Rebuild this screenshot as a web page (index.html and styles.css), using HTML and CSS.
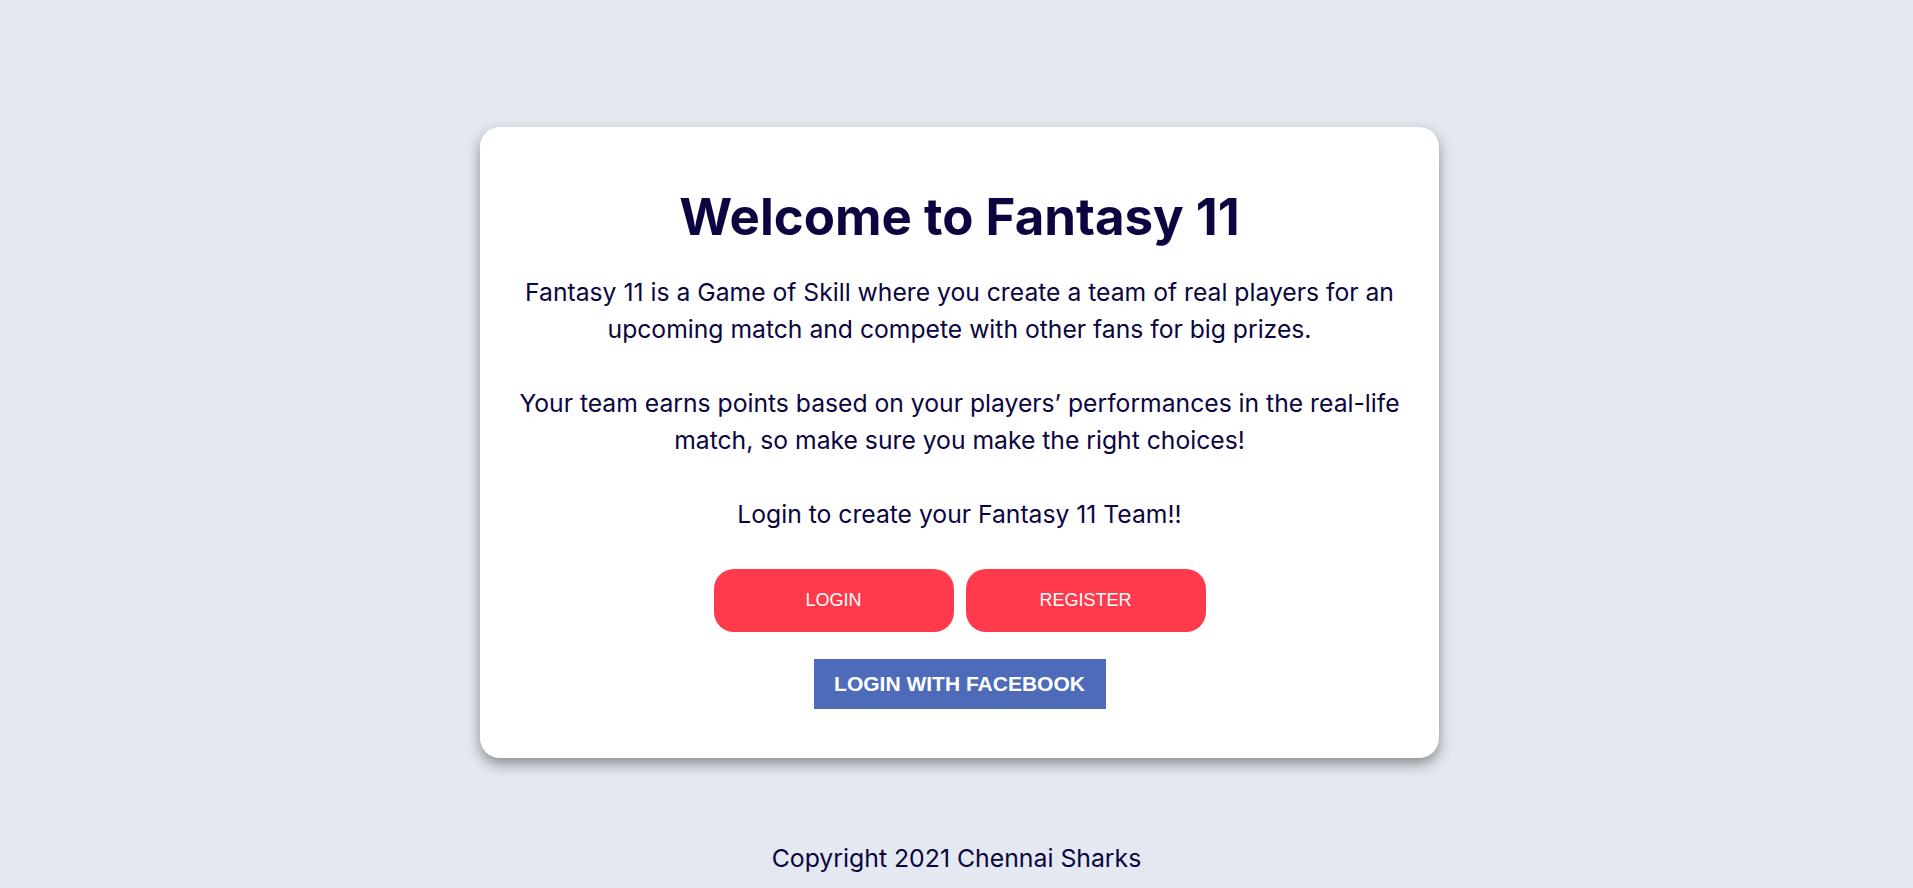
FILE: index.html
```html
<!DOCTYPE html>
<html lang="en">
<head>
<meta charset="utf-8">
<title>Fantasy 11</title>
<link rel="stylesheet" href="styles.css">
</head>
<body>
<main class="page">
  <section class="card">
    <h1 class="title">Welcome to Fantasy 11</h1>
    <p class="intro">Fantasy 11 is a Game of Skill where you create a team of real players for an upcoming match and compete with other fans for big prizes.<br><br>Your team earns points based on your players’ performances in the real-life match, so make sure you make the right choices!<br><br>Login to create your Fantasy 11 Team!!</p>
    <div class="actions">
      <button class="btn-pill">LOGIN</button>
      <button class="btn-pill">REGISTER</button>
    </div>
    <div class="fb-row">
      <button class="btn-fb">LOGIN WITH FACEBOOK</button>
    </div>
  </section>
  <footer class="footer">Copyright 2021 Chennai Sharks</footer>
</main>
</body>
</html>
```
FILE: styles.css
```css
html, body {
  margin: 0;
  padding: 0;
}
body {
  background: #e4e9f1;
  font-family: "Inter", "Noto Sans", sans-serif;
  color: #0b0640;
}
.page {
  padding-top: 127px;
  display: flex;
  flex-direction: column;
  align-items: center;
}
.card {
  box-sizing: border-box;
  width: 959px;
  height: 631px;
  margin-left: 6px;
  background: #ffffff;
  border-radius: 20px;
  box-shadow: 0 6px 14px rgba(0, 0, 0, 0.4);
  padding: 60px 16px 0;
  text-align: center;
}
.title {
  margin: 0;
  font-size: 51px;
  line-height: 60px;
  font-weight: 700;
  color: #0b0640;
}
.intro {
  margin: 27px 0 0;
  font-size: 24.7px;
  line-height: 37px;
  font-weight: 400;
}
.actions {
  margin-top: 36px;
  display: flex;
  justify-content: center;
  gap: 12px;
}
.btn-pill {
  width: 240px;
  height: 63px;
  border: none;
  border-radius: 20px;
  background: #ff3a4c;
  color: #ffffff;
  font-family: "Liberation Sans", Arial, sans-serif;
  font-size: 18px;
}
.fb-row {
  margin-top: 27px;
  display: flex;
  justify-content: center;
}
.btn-fb {
  width: 292px;
  height: 50px;
  border: none;
  background: #4e6bba;
  color: #ffffff;
  font-family: "Liberation Sans", Arial, sans-serif;
  font-size: 21px;
  font-weight: 700;
}
.footer {
  margin-top: 85px;
  font-size: 24.8px;
  line-height: 30px;
}
```
